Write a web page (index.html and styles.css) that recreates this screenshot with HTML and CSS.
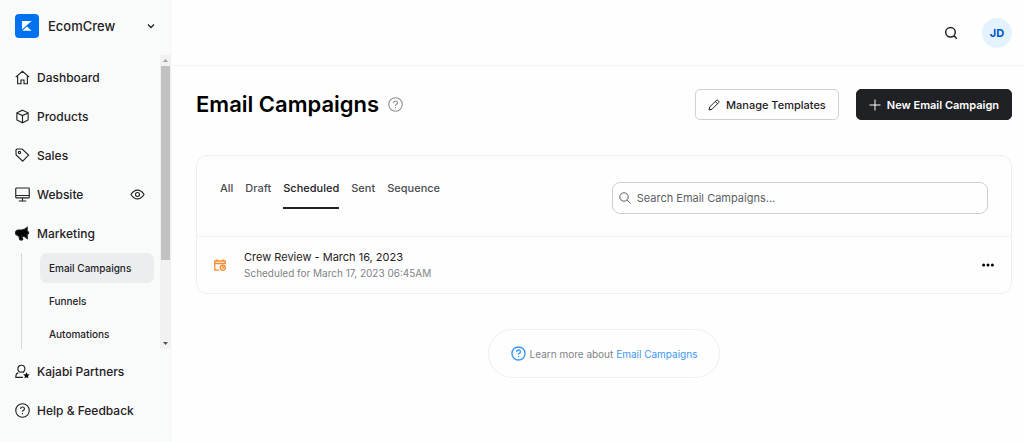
FILE: index.html
```
<!DOCTYPE html>
<html lang="en">
<head>
  <meta charset="UTF-8">
  <meta name="viewport" content="width=device-width, initial-scale=1.0">
  <title>Email Campaigns</title>
  <link rel="stylesheet" href="styles.css">
</head>
<body>
  <aside class="sidebar">
    <button class="brand">
      <svg class="logo" viewBox="0 0 24 24">
        <rect width="24" height="24" rx="4" fill="#0072ef"/>
        <path d="M7 7h9.600L7 15.600z" fill="#fff"/>
        <path d="M7.400 16.800L12 12.600l4.600 4.200z" fill="#fff"/>
      </svg>
      <span>EcomCrew</span>
      <svg class="chevron" viewBox="0 0 10 10"><path d="M2 3.500l3 3 3-3"/></svg>
    </button>

    <div class="scroll-area">
      <nav class="nav">
        <a class="nav-item" href="#">
          <svg class="icon" viewBox="0 0 16 16"><path d="M.8 7.600L8 1.300l7.200 6.300M2.800 6.500v8.200h3.600v-4h3.200v4h3.600V6.500"/></svg>
          Dashboard
        </a>
        <a class="nav-item" href="#">
          <svg class="icon" viewBox="0 0 16 16"><path d="M8 1.300l6 2.800v7.600l-6 3-6-3V4.100zM2 4.200L8 7l6-2.800M8 7v7.500"/></svg>
          Products
        </a>
        <a class="nav-item" href="#">
          <svg class="icon" viewBox="0 0 16 16"><path d="M1 2.200L2 1.100h5.600l6.900 6.500-6.300 6.500L1.200 7.400z"/><circle cx="4.800" cy="4.800" r="1.200"/></svg>
          Sales
        </a>
        <a class="nav-item" href="#">
          <svg class="icon" viewBox="0 0 16 16"><path d="M1.600 1h12.800q.8 0 .8.8v9q0 .8-.8.8H1.600q-.8 0-.8-.8v-9q0-.8.8-.8zM1 9h14M8 12v2.800M4 14.900h8"/></svg>
          Website
          <svg class="icon eye" viewBox="0 0 16 16"><path d="M1 8q3-4.700 7-4.700T15 8q-3 4.700-7 4.700T1 8z"/><circle cx="8" cy="8" r="2.100"/></svg>
        </a>
        <a class="nav-item" href="#">
          <svg class="icon" viewBox="0 0 16 16"><path class="solid" d="M13 1.500v4.200q1.600.3 1.600 1.600T13 9v4.300q-3-2.700-6-2.900l1.300 3.900q-1.500 1.400-3.200.2L3.900 10.300q-3.300-.2-3.300-3t3.300-3h3q3.300-.2 6.100-2.800z"/></svg>
          Marketing
        </a>
        <div class="subnav">
          <a class="subnav-item active" href="#">Email Campaigns</a>
          <a class="subnav-item" href="#">Funnels</a>
          <a class="subnav-item" href="#">Automations</a>
        </div>
      </nav>
      <div class="scrollbar">
        <svg viewBox="0 0 11 11"><path d="M3 7l2.500-3L8 7z" fill="#a3a3a3"/></svg>
        <div class="thumb"></div>
        <svg class="down" viewBox="0 0 11 11"><path d="M3 4l2.500 3L8 4z" fill="#505050"/></svg>
      </div>
    </div>

    <nav class="nav nav-bottom">
      <a class="nav-item" href="#">
        <svg class="icon" viewBox="0 0 16 16"><circle cx="6.800" cy="5" r="3.700"/><path d="M8.500 14.300H.9v-1.500q0-2.500 2.600-3.600M9.600 9l-.6-.4"/><path class="solid star" d="M12.200 8.800l1 2.100 2.400.3-1.800 1.600.5 2.300-2.100-1.100-2.100 1.100.5-2.300-1.800-1.600 2.400-.3z"/></svg>
        Kajabi Partners
      </a>
      <a class="nav-item" href="#">
        <svg class="icon" viewBox="0 0 16 16"><circle cx="8" cy="8" r="7.200"/><path d="M5.900 6.300q.1-2 2.100-2t2.100 1.800q0 1.100-1.100 1.600T8 9.300M8 10.700v1.200"/></svg>
        Help &amp; Feedback
      </a>
    </nav>
  </aside>

  <main class="main">
    <header class="topbar">
      <button class="icon-button" aria-label="Search">
        <svg class="search-icon" viewBox="0 0 14 14"><circle cx="6.500" cy="6.300" r="4.800"/><path d="M10 9.800l2.800 2.900"/></svg>
      </button>
      <button class="avatar">JD</button>
    </header>

    <div class="content">
      <div class="title-row">
        <h1>Email Campaigns</h1>
        <svg class="icon help" viewBox="0 0 16 16"><circle cx="8" cy="8" r="7.200"/><path d="M5.900 6.300q.1-2 2.100-2t2.100 1.800q0 1.100-1.100 1.600T8 9.300M8 10.700v1.200"/></svg>
        <div class="actions">
          <button class="btn">
            <svg class="btn-icon" viewBox="0 0 12 12"><path d="M1 11l.7-3L8.400 1.300q.8-.7 1.700.1l.5.5q.8.900.1 1.700L4 10.300zM7.300 2.500l2.200 2.200"/></svg>
            Manage Templates
          </button>
          <button class="btn btn-dark">
            <svg class="btn-icon" viewBox="0 0 12 12"><path d="M6 .5v11M.5 6h11"/></svg>
            New Email Campaign
          </button>
        </div>
      </div>

      <section class="card">
        <div class="card-head">
          <div class="tabs">
            <button class="tab">All</button>
            <button class="tab">Draft</button>
            <button class="tab active">Scheduled</button>
            <button class="tab">Sent</button>
            <button class="tab">Sequence</button>
          </div>
          <label class="search">
            <svg viewBox="0 0 12 12"><circle cx="5" cy="5" r="4.200"/><path d="M8 8l3.500 3.500"/></svg>
            <input type="text" placeholder="Search Email Campaigns..." aria-label="Search Email Campaigns">
          </label>
        </div>
        <div class="campaign">
          <svg class="calendar" viewBox="0 0 12 12"><path d="M5 11.200H.8V2h10.400v3M.8 4.500h10.400M3 .3V2M9 .3V2"/><circle cx="8.800" cy="8.700" r="2.500"/><path d="M8.800 7v1.900h1.400"/></svg>
          <div class="campaign-text">
            <div class="campaign-name">Crew Review - March 16, 2023</div>
            <div class="campaign-date">Scheduled for March 17, 2023 06:45AM</div>
          </div>
          <button class="icon-button" aria-label="More">
            <svg class="dots" viewBox="0 0 12 4"><circle cx="1.600" cy="2" r="1.500"/><circle cx="6" cy="2" r="1.500"/><circle cx="10.400" cy="2" r="1.500"/></svg>
          </button>
        </div>
      </section>

      <div class="learn">
        <svg class="icon learn-icon" viewBox="0 0 16 16"><circle cx="8" cy="8" r="7"/><path d="M5.900 6.300q.1-2 2.100-2t2.100 1.800q0 1.100-1.100 1.600T8 9.300M8 10.700v1.200"/></svg>
        <span>Learn more about <a href="#">Email Campaigns</a></span>
      </div>
    </div>
  </main>
</body>
</html>
```
FILE: styles.css
```
* {
  box-sizing: border-box;
}
body {
  margin: 0;
  display: flex;
  min-height: 100vh;
  font-family: Inter, "Liberation Sans", sans-serif;
  font-size: 11px;
  color: #1f2124;
  background-color: #fefefe;
}
button {
  font: inherit;
  color: inherit;
  background: none;
  border: none;
  padding: 0;
  cursor: pointer;
}
a {
  color: inherit;
  text-decoration: none;
}
svg {
  display: block;
  flex-shrink: 0;
  fill: none;
  stroke: none;
}

/* Sidebar */
.sidebar {
  width: 172px;
  flex-shrink: 0;
  background-color: #f9fafa;
}
.brand {
  display: flex;
  align-items: center;
  width: 100%;
  height: 55px;
  padding: 0 16px 3px 15px;
  gap: 9px;
  font-size: 13px;
  font-weight: 500;
}
.logo {
  width: 24px;
  height: 24px;
}
.chevron {
  width: 10px;
  height: 10px;
  margin-left: auto;
  stroke: #1f2124;
  stroke-width: 1.3;
}
.scroll-area {
  display: flex;
}
.nav {
  flex: 1;
  padding-top: 3px;
}
.nav-item {
  display: flex;
  align-items: center;
  height: 39px;
  padding: 0 15px;
  gap: 7px;
  font-size: 12px;
  font-weight: 500;
}
.icon {
  width: 15px;
  height: 15px;
  stroke: #1f2124;
  stroke-width: 1.2;
}
.solid {
  fill: #000;
}
.star {
  stroke: none;
}
.eye {
  margin-left: auto;
}
.subnav {
  display: flex;
  flex-direction: column;
  gap: 3px;
  margin-left: 21px;
  padding: 0 6px 0 18px;
  border-left: 1px solid #d5d8da;
}
.subnav-item {
  display: flex;
  align-items: center;
  height: 30px;
  padding: 0 9px;
  border-radius: 7px;
  font-size: 10px;
  font-weight: 500;
}
.subnav-item.active {
  background-color: #ebeeef;
}
.scrollbar {
  display: flex;
  flex-direction: column;
  width: 11px;
  margin-right: 1px;
  background-color: #f1f1f1;
}
.thumb {
  height: 66%;
  margin: 0 1px;
  background-color: #c1c1c1;
}
.down {
  margin-top: auto;
}

/* Top bar */
.main {
  flex: 1;
  min-width: 0;
}
.topbar {
  display: flex;
  align-items: center;
  justify-content: flex-end;
  gap: 24px;
  height: 66px;
  padding-right: 12px;
  border-bottom: 1px solid #f3f3f4;
}
.search-icon {
  width: 14px;
  height: 14px;
  stroke: #1f2124;
  stroke-width: 1.5;
}
.avatar {
  width: 30px;
  height: 30px;
  border-radius: 50%;
  background-color: #e3f3fe;
  color: #0056c7;
  font-weight: 700;
}

/* Page content */
.content {
  padding: 23px 12px 23px 24px;
}
.title-row {
  display: flex;
  align-items: center;
  gap: 9px;
}
h1 {
  margin: 0;
  font-size: 22px;
  line-height: 31px;
  font-weight: 600;
  color: #000;
}
.help {
  stroke: #8c8f93;
}
.actions {
  display: flex;
  gap: 17px;
  margin-left: auto;
}
.btn {
  display: flex;
  align-items: center;
  gap: 6px;
  height: 31px;
  padding: 0 12px;
  border: 1px solid #cfd1d3;
  border-radius: 5px;
  font-weight: 500;
}
.btn-icon {
  width: 12px;
  height: 12px;
  stroke: currentColor;
}
.btn-dark {
  background-color: #1f2124;
  border-color: #1f2124;
  color: #fff;
  font-weight: 600;
}
.card {
  margin-top: 35px;
  border: 1px solid #f0f0f1;
  border-radius: 11px;
}
.card-head {
  display: flex;
  justify-content: space-between;
  align-items: flex-start;
  padding: 16px 23px 22px;
  border-bottom: 1px solid #f0f0f1;
}
.tabs {
  display: flex;
  gap: 12px;
}
.tab {
  height: 37px;
  padding-bottom: 3px;
  border-bottom: 2px solid transparent;
  color: #4b4e52;
  font-weight: 500;
}
.tab.active {
  border-color: #1f2124;
  color: #1f2124;
}
.search {
  display: flex;
  align-items: center;
  gap: 6px;
  width: 49%;
  height: 32px;
  margin-top: 10px;
  padding: 0 6px;
  border: 1px solid #cfd1d3;
  border-radius: 8px;
}
.search svg {
  width: 12px;
  height: 12px;
  stroke: #5b5e62;
}
.search input {
  flex: 1;
  min-width: 0;
  padding: 0;
  border: none;
  outline: none;
  background: none;
  font: inherit;
}
.search input::placeholder {
  color: #5b5e62;
  opacity: 1;
}
.campaign {
  display: flex;
  align-items: center;
  gap: 18px;
  padding: 12px 17px;
}
.calendar {
  width: 12px;
  height: 12px;
  stroke: #f78b2d;
  stroke-width: 1.3;
}
.campaign-text {
  flex: 1;
}
.campaign-name {
  line-height: 17px;
}
.campaign-date {
  font-size: 10px;
  line-height: 15px;
  color: #808387;
}
.dots {
  width: 12px;
  height: 4px;
  fill: #000;
}
.learn {
  display: flex;
  align-items: center;
  gap: 4px;
  width: fit-content;
  height: 49px;
  margin: 35px auto 0;
  padding: 0 22px;
  border: 1px solid #f0f0f1;
  border-radius: 25px;
  font-size: 10px;
  color: #808387;
}
.learn a,
.learn-icon {
  color: #3c98f5;
}
.learn-icon {
  stroke: currentColor;
  stroke-width: 1.5;
}
```
